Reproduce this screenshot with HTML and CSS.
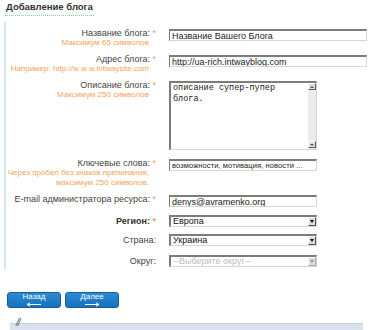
FILE: index.html
```html
<!DOCTYPE html>
<html lang="ru">
<head>
<meta charset="UTF-8" />
<title>Добавление блога</title>
<link rel="stylesheet" href="styles.css">
</head>
<body>

<div class="page">
  <h1 class="title">Добавление блога</h1>

  <form class="blog-form">
    <div class="row">
      <div class="label-cell">
        <label>Название блога: <span class="req">*</span></label>
        <div class="hint">Максимум 65 символов</div>
      </div>
      <div class="field-cell"><input class="text wide" type="text" value="Название Вашего Блога"></div>
    </div>

    <div class="row">
      <div class="label-cell">
        <label>Адрес блога: <span class="req">*</span></label>
        <div class="hint">Например: http://w w w.intwaysite.com</div>
      </div>
      <div class="field-cell"><input class="text wide" type="text" value="http://ua-rich.intwayblog.com"></div>
    </div>

    <div class="row">
      <div class="label-cell">
        <label>Описание блога: <span class="req">*</span></label>
        <div class="hint">Максимум 250 символов</div>
      </div>
      <div class="field-cell">
        <div class="textarea-box">
          <textarea>описание супер-пупер блога.</textarea>
          <div class="scrollbar">
            <span class="sb-btn up"></span>
            <span class="sb-btn down"></span>
          </div>
        </div>
      </div>
    </div>

    <div class="row row-keywords">
      <div class="label-cell">
        <label>Ключевые слова: <span class="req">*</span></label>
        <div class="hint">Через пробел без знаков препинания,<br>максимум 250 символов.</div>
      </div>
      <div class="field-cell"><input class="text keywords" type="text" value="возможности, мотивация, новости ..."></div>
    </div>

    <div class="row">
      <div class="label-cell">
        <label>E-mail администратора ресурса: <span class="req">*</span></label>
      </div>
      <div class="field-cell"><input class="text" type="text" value="denys@avramenko.org"></div>
    </div>

    <div class="row row-choice first">
      <div class="label-cell">
        <label class="strong">Регион: <span class="req">*</span></label>
      </div>
      <div class="field-cell">
        <div class="select-wrap">
          <select><option>Европа</option></select>
          <span class="select-btn"></span>
        </div>
      </div>
    </div>

    <div class="row row-choice">
      <div class="label-cell">
        <label>Страна:</label>
      </div>
      <div class="field-cell">
        <div class="select-wrap">
          <select><option>Украина</option></select>
          <span class="select-btn"></span>
        </div>
      </div>
    </div>

    <div class="row row-choice last">
      <div class="label-cell">
        <label>Округ:</label>
      </div>
      <div class="field-cell">
        <div class="select-wrap disabled">
          <select disabled><option>--Выберите округ--</option></select>
          <span class="select-btn"></span>
        </div>
      </div>
    </div>
  </form>

  <div class="buttons">
    <button class="btn" type="button">
      <span>Назад</span>
      <svg width="16" height="5" viewBox="0 0 16 5"><path d="M1 2.5H15M1 2.5L4 0.8M1 2.5L4 4.2" stroke="#fff" stroke-width="1" fill="none"/></svg>
    </button>
    <button class="btn" type="button">
      <span>Далее</span>
      <svg width="16" height="5" viewBox="0 0 16 5"><path d="M1 2.5H15M15 2.5L12 0.8M15 2.5L12 4.2" stroke="#fff" stroke-width="1" fill="none"/></svg>
    </button>
  </div>

  <div class="footer-bar"><span class="slashes">//</span></div>
</div>

</body>
</html>
```

FILE: styles.css
```css
body {
  margin: 0;
  font-family: "Liberation Sans", Arial, sans-serif;
  background-color: #fff;
  color: #444;
}
.page {
  padding-top: 1px;
}
.title {
  display: block;
  width: max-content;
  margin: 0 0 6px 5px;
  padding: 0 1px 2px 1px;
  font-size: 9.5px;
  line-height: 12px;
  font-weight: bold;
  color: #333;
  border-bottom: 1px dotted #8cc3e0;
}
.blog-form {
  display: flex;
  flex-direction: column;
  gap: 6px;
  margin: 0 0 0 4px;
  padding: 6px 0 2px 0;
  border-left: 2px solid #d3e6f1;
}
.row {
  display: grid;
  grid-template-columns: 150px 1fr;
  column-gap: 13px;
}
.row-keywords {
  margin-top: 2px;
}
.row-choice {
  margin-top: 1px;
}
.row-choice.first {
  margin-top: 2px;
}
.row-choice.last {
  margin-top: 3px;
}
.label-cell {
  text-align: right;
}
.label-cell label {
  display: block;
  font-size: 9px;
  line-height: 10px;
  color: #444;
}
.row-choice label {
  padding-top: 1px;
}
.label-cell label.strong {
  font-weight: bold;
  color: #333;
}
.req {
  color: #f0a050;
}
.hint {
  padding-right: 7px;
  font-size: 8px;
  line-height: 10px;
  color: #f2a35c;
}
.text {
  display: block;
  box-sizing: border-box;
  width: 148px;
  height: 12px;
  margin: 1px 0 0 0;
  padding: 0 2px;
  border-style: solid;
  border-width: 2px 1px 1px 1px;
  border-color: #7c7c7c #d6d6d6 #d6d6d6 #7c7c7c;
  font-family: "Liberation Sans", Arial, sans-serif;
  font-size: 9px;
  color: #222;
  outline: none;
}
.text.wide {
  width: 198px;
}
.text.keywords {
  font-size: 7.5px;
  letter-spacing: 0.1px;
}
.textarea-box {
  display: flex;
  box-sizing: border-box;
  width: 148px;
  height: 69px;
  margin-top: 1px;
  border-style: solid;
  border-width: 2px 1px 1px 2px;
  border-color: #7c7c7c #d6d6d6 #d6d6d6 #7c7c7c;
}
.textarea-box textarea {
  flex: 1;
  min-width: 0;
  margin: 0;
  padding: 0 2px;
  border: none;
  resize: none;
  overflow: hidden;
  font-family: "Liberation Mono", "Courier New", monospace;
  font-size: 8.5px;
  line-height: 11px;
  color: #222;
  outline: none;
}
.scrollbar {
  display: flex;
  flex-direction: column;
  justify-content: space-between;
  width: 8px;
  padding-bottom: 1px;
  background-color: #ececec;
}
.sb-btn {
  display: flex;
  align-items: center;
  justify-content: center;
  box-sizing: border-box;
  height: 7px;
  background-color: #dedede;
  border: 1px solid;
  border-color: #fff #5c5c5c #5c5c5c #fff;
}
.sb-btn::after {
  content: "";
  border-left: 2px solid transparent;
  border-right: 2px solid transparent;
}
.sb-btn.up::after {
  border-bottom: 2px solid #555;
}
.sb-btn.down::after {
  border-top: 2px solid #555;
}
.select-wrap {
  display: flex;
  box-sizing: border-box;
  width: 148px;
  height: 12px;
  border-style: solid;
  border-width: 2px 1px 1px 2px;
  border-color: #7c7c7c #d6d6d6 #d6d6d6 #7c7c7c;
}
.select-wrap select {
  flex: 1;
  min-width: 0;
  height: 9px;
  margin: 0;
  padding: 0 0 0 2px;
  border: none;
  -webkit-appearance: none;
  appearance: none;
  background: #fff;
  font-family: "Liberation Sans", Arial, sans-serif;
  font-size: 9px;
  line-height: 9px;
  color: #111;
  outline: none;
}
.select-btn {
  display: flex;
  align-items: center;
  justify-content: center;
  box-sizing: border-box;
  width: 8px;
  height: 9px;
  background-color: #dcdcdc;
  border: 1px solid;
  border-color: #fff #555 #555 #fff;
}
.select-btn::after {
  content: "";
  border-top: 3px solid #111;
  border-left: 2px solid transparent;
  border-right: 2px solid transparent;
}
.select-wrap.disabled select {
  color: #a0a0a0;
}
.select-wrap.disabled .select-btn {
  border-color: #fff #aaa #aaa #fff;
}
.select-wrap.disabled .select-btn::after {
  border-top-color: #999;
}
.buttons {
  display: flex;
  gap: 4px;
  margin: 23px 0 0 7px;
}
.btn {
  display: flex;
  flex-direction: column;
  align-items: center;
  justify-content: center;
  gap: 1px;
  width: 54px;
  height: 16px;
  padding: 0;
  background: linear-gradient(#2a8ad2, #1872bb);
  border: 1px solid #145f9e;
  border-radius: 3px;
  color: #fff;
  font-family: "Liberation Sans", Arial, sans-serif;
  font-size: 8px;
  line-height: 8px;
  cursor: pointer;
}
.btn svg {
  display: block;
}
.footer-bar {
  position: relative;
  height: 7px;
  margin: 15px 10px 0 10px;
  background-color: #dae3eb;
  border-top: 1px solid #c5d2dc;
}
.slashes {
  position: absolute;
  left: 6px;
  top: -6px;
  font-size: 10px;
  line-height: 10px;
  font-style: italic;
  color: #555;
  letter-spacing: -1px;
}
```
